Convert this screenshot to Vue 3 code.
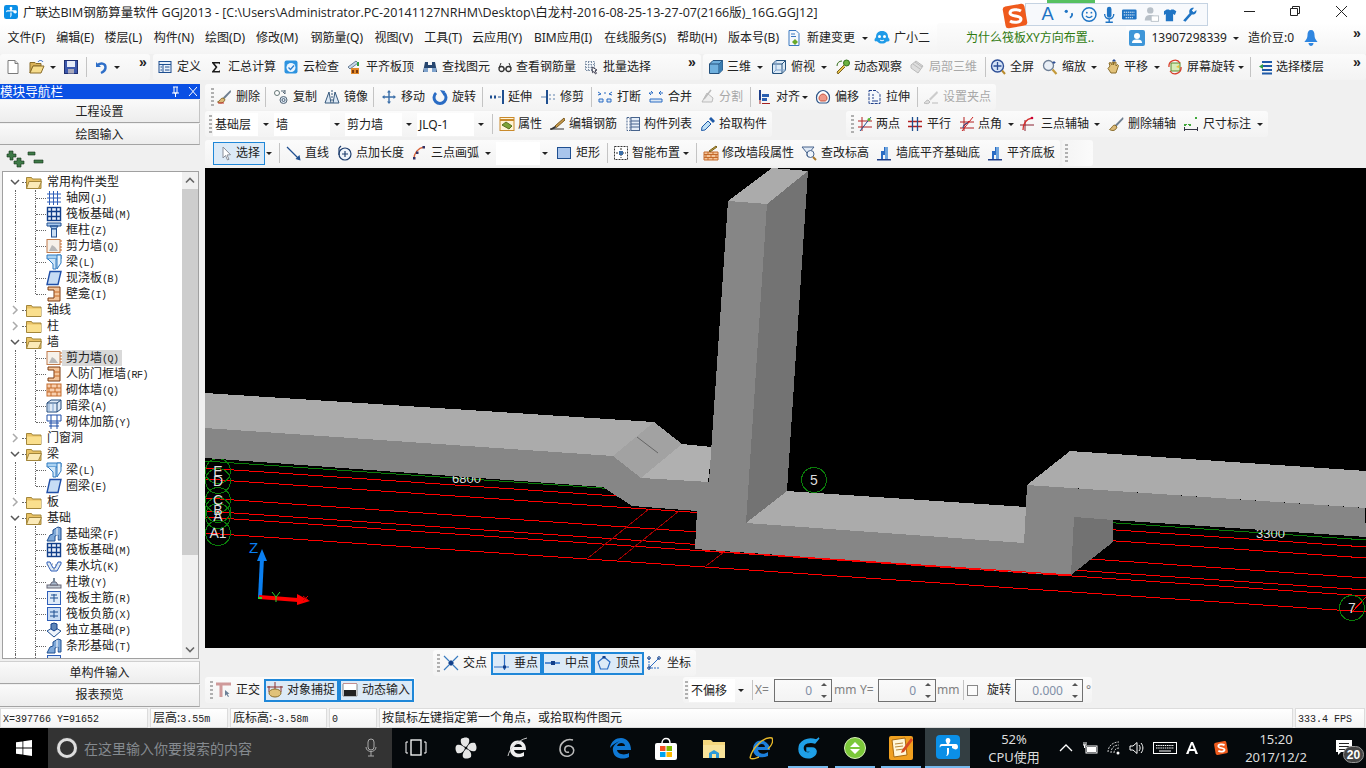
<script setup>
import { h } from 'vue'

const t = (ic, text, x, end, o = {}) => ({ k: 't', ic, text, x, w: end - x, ...o })
const a = (x) => ({ k: 'a', x: x - 3, w: 6 })
const s = (x) => ({ k: 's', x, w: 1 })
const g = (x) => ({ k: 'g', x, w: 3 })
const c = (text, x, end) => ({ k: 'c', text, x, w: end - x })
const l = (text, x, end, o = {}) => ({ k: 'l', text, x, w: end - x, ...o })
const n = (text, x, end) => ({ k: 'n', text, x, w: end - x })
const off = { dis: true }
const on = { on: true }

const place = (items, start) => {
  let cur = start
  return items.map((it) => {
    const m = it.x - cur
    cur = it.x + it.w
    return { ...it, style: { marginLeft: m + 'px', width: it.w + 'px' } }
  })
}

const useIcon = (name) => h('svg', { class: 'tb-ic' }, [h('use', { href: '#' + name })])

const renderItem = (it) => {
  if (it.k === 't') {
    return h('div', { class: ['tb-tool', { 'tb-dis': it.dis, 'tb-on': it.on, 'tb-wide': it.wide }], style: it.style }, [
      it.ic ? useIcon(it.ic) : null,
      h('span', { class: 'tb-txt' }, it.text)
    ])
  }
  if (it.k === 'a') return h('div', { class: 'tb-arrow', style: it.style })
  if (it.k === 's') return h('div', { class: 'tb-sep', style: it.style })
  if (it.k === 'g') return h('div', { class: 'tb-grip', style: it.style })
  if (it.k === 'c') return h('div', { class: 'tb-combo', style: it.style }, it.text)
  if (it.k === 'l') return h('div', { class: ['tb-label', it.cls], style: it.style }, it.text)
  if (it.k === 'n') {
    return h('div', { class: 'tb-num', style: it.style }, [
      h('span', { class: 'tb-val' }, it.text),
      h('span', { class: 'tb-spin' }, [h('i', { class: 'tb-up' }), h('i', { class: 'tb-down' })])
    ])
  }
  if (it.k === 'b') return h('div', { class: 'tb-check', style: it.style })
  return null
}

const ToolRow = (props) => {
  let cur = props.start
  return h('div', { class: 'tb-row' }, props.chunks.map((ch) => {
    const m = ch.x - cur
    cur = ch.end
    return h('div', {
      class: ['tb-chunk', ch.cls],
      style: { marginLeft: m + 'px', width: ch.end - ch.x + 'px' }
    }, place(ch.items, ch.x).map(renderItem))
  }))
}

const menuRow = [
  { x: 0, end: 937, cls: 'tb-flat', items: [
    t(null, '文件(F)', 7, 45), t(null, '编辑(E)', 55, 94), t(null, '楼层(L)', 104, 142), t(null, '构件(N)', 152, 194),
    t(null, '绘图(D)', 204, 245), t(null, '修改(M)', 255, 298), t(null, '钢筋量(Q)', 309, 363), t(null, '视图(V)', 373, 413),
    t(null, '工具(T)', 423, 462), t(null, '云应用(Y)', 472, 522), t(null, 'BIM应用(I)', 533, 592), t(null, '在线服务(S)', 603, 666),
    t(null, '帮助(H)', 676, 717), t(null, '版本号(B)', 727, 779), t('i-newchg', '新建变更', 786, 855), a(865),
    t('i-bot', '广小二', 874, 930)
  ] },
  { x: 937, end: 1126, cls: 'tb-tip', items: [l('为什么筏板XY方向布置..', 966, 1094, { cls: 'tb-green' })] },
  { x: 1126, end: 1366, cls: 'tb-flat', items: [
    t('i-avatar', '13907298339', 1129, 1227), a(1236), l('造价豆:0', 1248, 1294), t('i-bell', '', 1303, 1322),
    l('»', 1353, 1363, { cls: 'tb-more' })
  ] }
]

const row1 = [
  { x: 0, end: 150, items: [
    t('i-doc', '', 5, 21), t('i-open', '', 29, 45), a(53), t('i-save', '', 63, 79), s(86), t('i-undo', '', 93, 109), a(117),
    l('»', 139, 149, { cls: 'tb-more' })
  ] },
  { x: 153, end: 701, items: [
    t('i-define', '定义', 157, 201), t('i-sigma', '汇总计算', 208, 276), t('i-cloud', '云检查', 283, 339), t('i-flush', '平齐板顶', 346, 414),
    t('i-binoc', '查找图元', 422, 490), t('i-glass', '查看钢筋量', 497, 576), t('i-batch', '批量选择', 583, 651),
    l('»', 688, 698, { cls: 'tb-more' })
  ] },
  { x: 703, end: 1366, items: [
    t('i-cube', '三维', 708, 751), a(760), t('i-cube2', '俯视', 771, 815), a(824), t('i-orbit', '动态观察', 835, 902),
    t('i-part', '局部三维', 909, 977, off), s(985), t('i-full', '全屏', 990, 1034), t('i-zoom', '缩放', 1042, 1086), a(1094),
    t('i-hand', '平移', 1105, 1148), a(1157), t('i-rot', '屏幕旋转', 1167, 1235), a(1241), s(1250), t('i-floors', '选择楼层', 1258, 1324),
    l('»', 1353, 1363, { cls: 'tb-more' })
  ] }
]

const row2 = [
  { x: 205, end: 996, items: [
    g(211), t('i-brush', '删除', 216, 260), s(265), t('i-copy', '复制', 273, 317), t('i-mirror', '镜像', 324, 368), s(373),
    t('i-move', '移动', 381, 425), t('i-rotate', '旋转', 432, 476), s(482), t('i-extend', '延伸', 489, 532), t('i-trim', '修剪', 540, 584), s(591),
    t('i-break', '打断', 597, 641), t('i-merge', '合并', 648, 692), t('i-split', '分割', 699, 743, off), s(750),
    t('i-align', '对齐', 757, 800), a(805), t('i-offset', '偏移', 815, 859), t('i-stretch', '拉伸', 867, 910), s(917), t('i-grip', '设置夹点', 923, 991, off)
  ] }
]

const row3 = [
  { x: 205, end: 772, items: [
    g(209), c('基础层', 213, 258), a(266), c('墙', 274, 330), a(337), c('剪力墙', 345, 402), a(409), c('JLQ-1', 417, 474), a(481), s(492),
    t('i-prop', '属性', 499, 542), t('i-edit', '编辑钢筋', 549, 617), t('i-list', '构件列表', 625, 692), t('i-pick', '拾取构件', 700, 767)
  ] },
  { x: 846, end: 1268, items: [
    g(851), t('i-two', '两点', 857, 900), t('i-par', '平行', 907, 951), t('i-ang', '点角', 959, 1002), a(1011),
    t('i-arc3', '三点辅轴', 1019, 1089), a(1097), t('i-delaux', '删除辅轴', 1108, 1176), t('i-dim', '尺寸标注', 1183, 1251), a(1260)
  ] }
]

const row4 = [
  { x: 205, end: 1060, items: [
    t('i-cursor', '选择', 213, 265, { on: true, wide: true }), a(269), s(279), t('i-line', '直线', 286, 329), t('i-pluslen', '点加长度', 336, 404),
    t('i-arc', '三点画弧', 411, 479), a(488), c('', 496, 540), a(545), t('i-rect', '矩形', 556, 600), s(607), t('i-smart', '智能布置', 613, 680), a(686), s(696),
    t('i-brick', '修改墙段属性', 703, 794), t('i-elev', '查改标高', 801, 869), t('i-wallb', '墙底平齐基础底', 876, 980), t('i-wallb', '平齐底板', 987, 1055)
  ] },
  { x: 1062, end: 1093, cls: 'tb-stub', items: [g(1065)] }
]

const row5 = [
  { x: 433, end: 696, items: [
    g(437), t('i-cross', '交点', 443, 487), t('i-perp', '垂点', 491, 542, on), t('i-mid', '中点', 542, 593, on), t('i-vert', '顶点', 593, 644, on),
    t('i-coord', '坐标', 646, 691)
  ] }
]

const row6 = [
  { x: 205, end: 415, items: [
    g(210), t('i-ortho', '正交', 216, 260), t('i-snap', '对象捕捉', 264, 339, on), t('i-dyn', '动态输入', 339, 414, on)
  ] },
  { x: 683, end: 1092, items: [
    g(685), c('不偏移', 689, 735), a(741), s(752), l('X=', 755, 771, { cls: 'tb-muted' }), n('0', 774, 832), l('mm', 834, 856, { cls: 'tb-muted' }),
    l('Y=', 860, 875, { cls: 'tb-muted' }), n('0', 878, 936), l('mm', 937, 958, { cls: 'tb-muted' }), s(963), { k: 'b', x: 967, w: 11 },
    l('旋转', 987, 1011), n('0.000', 1015, 1083), l('°', 1086, 1091, { cls: 'tb-muted' })
  ] }
]

const tree = [
  { f: 1, open: 1, zh: '常用构件类型' },
  { ic: 'i-t-grid', zh: '轴网', k: '(J)', g: 1 }, { ic: 'i-t-raft', zh: '筏板基础', k: '(M)', g: 1 }, { ic: 'i-t-col', zh: '框柱', k: '(Z)', g: 1 },
  { ic: 'i-t-shear', zh: '剪力墙', k: '(Q)', g: 1 }, { ic: 'i-t-beam', zh: '梁', k: '(L)', g: 1 }, { ic: 'i-t-slab', zh: '现浇板', k: '(B)', g: 1 },
  { ic: 'i-t-niche', zh: '壁龛', k: '(I)', g: 1, last: 1 },
  { f: 1, zh: '轴线' }, { f: 1, zh: '柱' }, { f: 1, open: 1, zh: '墙' },
  { ic: 'i-t-shear', zh: '剪力墙', k: '(Q)', g: 1, sel: 1 }, { ic: 'i-t-niche', zh: '人防门框墙', k: '(RF)', g: 1 }, { ic: 'i-t-brick', zh: '砌体墙', k: '(Q)', g: 1 },
  { ic: 'i-t-hidden', zh: '暗梁', k: '(A)', g: 1 }, { ic: 'i-t-reinf', zh: '砌体加筋', k: '(Y)', g: 1, last: 1 },
  { f: 1, zh: '门窗洞' }, { f: 1, open: 1, zh: '梁' },
  { ic: 'i-t-beam', zh: '梁', k: '(L)', g: 1 }, { ic: 'i-t-slab', zh: '圈梁', k: '(E)', g: 1, last: 1 },
  { f: 1, zh: '板' }, { f: 1, open: 1, zh: '基础' },
  { ic: 'i-t-fbeam', zh: '基础梁', k: '(F)', g: 1 }, { ic: 'i-t-raft', zh: '筏板基础', k: '(M)', g: 1 }, { ic: 'i-t-pit', zh: '集水坑', k: '(K)', g: 1 },
  { ic: 'i-t-pier', zh: '柱墩', k: '(Y)', g: 1 }, { ic: 'i-t-main', zh: '筏板主筋', k: '(R)', g: 1 }, { ic: 'i-t-neg', zh: '筏板负筋', k: '(X)', g: 1 },
  { ic: 'i-t-iso', zh: '独立基础', k: '(P)', g: 1 }, { ic: 'i-t-fbeam', zh: '条形基础', k: '(T)', g: 1 }, { ic: 'i-t-main', zh: '', k: '', g: 1 }
]

const hLines = [
  [479, 558], [498, 578], [511, 590], [517, 596], [533, 612], [468, 547]
]
const circles = [
  { x: 218, y: 471, t: 'E' }, { x: 218, y: 481, t: 'D' }, { x: 218, y: 500, t: 'C' }, { x: 218, y: 510, t: 'B' },
  { x: 218, y: 516, t: 'A' }, { x: 218, y: 533, t: 'A1' }, { x: 814, y: 480, t: '5' }, { x: 1352, y: 608, t: '7' }
]

const cells = [
  { w: 148, t: 'X=397766 Y=91652', cls: 'mono' }, { w: 78, zh: '层高:', t: '3.55m', cls: 'mono' }, { w: 97, zh: '底标高:', t: '-3.58m', cls: 'mono' },
  { w: 48, t: '0', cls: 'mono' }, { w: 914, zh: '按鼠标左键指定第一个角点，或拾取构件图元', t: '' }, { w: 70, t: '333.4 FPS', cls: 'mono' }
]

const taskIcons = place([
  { x: 404, w: 24, ic: 'k-task' }, { x: 454, w: 24, ic: 'k-fan' }, { x: 506, w: 24, ic: 'k-ie' }, { x: 556, w: 24, ic: 'k-swirl' },
  { x: 608, w: 24, ic: 'k-edge' }, { x: 654, w: 24, ic: 'k-store' }, { x: 702, w: 24, ic: 'k-folder' }, { x: 749, w: 24, ic: 'k-ieb' },
  { x: 796, w: 24, ic: 'k-g', run: 1 }, { x: 843, w: 24, ic: 'k-green', run: 1 }, { x: 889, w: 24, ic: 'k-note', run: 1 }
], 392)
const trayIcons = place([
  { x: 1058, w: 16, ic: 'k-up' }, { x: 1082, w: 16, ic: 'k-batt' }, { x: 1107, w: 16, ic: 'k-wifi' }, { x: 1129, w: 16, ic: 'k-vol' },
  { x: 1153, w: 24, ic: 'k-kbd' }, { x: 1184, w: 16, ic: 'k-a' }, { x: 1212, w: 18, ic: 'k-s' }
], 1050)
</script>

<template>
  <div class="screen">
    <svg class="defs" aria-hidden="true">
      <symbol id="i-doc" viewBox="0 0 16 16"><path d="M3 1.500h7l3 3v10H3z" fill="#fff" stroke="#7a7a7a"/><path d="M10 1.500v3h3" fill="#ddd" stroke="#7a7a7a"/></symbol>
      <symbol id="i-open" viewBox="0 0 16 16"><path d="M1 3.500h5l1 1h5V7H4l-3 7z" fill="#d9b25a" stroke="#8a6d2a"/><path d="M4 7h11l-3 7H1z" fill="#f6dc8c" stroke="#8a6d2a"/><path d="M9 3c1-2 4-2 5 0" fill="none" stroke="#2b62c4"/></symbol>
      <symbol id="i-save" viewBox="0 0 16 16"><rect x="1.500" y="1.500" width="13" height="13" fill="#3c58ac" stroke="#1f2f70"/><rect x="4" y="2" width="8" height="6" fill="#e6ecf8"/><rect x="5" y="10" width="6" height="4.500" fill="#aab"/></symbol>
      <symbol id="i-undo" viewBox="0 0 16 16"><path d="M3 3v5h5z" fill="#2f6fc8"/><path d="M4 7c3-4 9-3 8.500 2-.3 2-2 4-4.500 5" fill="none" stroke="#2f6fc8" stroke-width="2.400"/></symbol>
      <symbol id="i-define" viewBox="0 0 16 16"><rect x="2" y="2.500" width="12" height="11" fill="#e8f0fa" stroke="#1e4f90"/><path d="M2 5.500h12M6 5.500v8M3.500 8h1.500M3.500 11h1.500M8 8h4.500M8 11h4.500" stroke="#1e4f90"/></symbol>
      <symbol id="i-sigma" viewBox="0 0 16 16"><path d="M4 3h8v2.500L11 4.500H6.500L9.500 8l-3 4H11l1-1v2.500H4v-1L7.500 8.300 4 4z" fill="#1a1a1a"/></symbol>
      <symbol id="i-cloud" viewBox="0 0 16 16"><rect x="1.500" y="1.500" width="13" height="13" rx="2" fill="#2d93e0"/><circle cx="8" cy="8.500" r="4.500" fill="#e9f5ff"/><path d="M5.500 8.500l2 2 3.500-4" fill="none" stroke="#2d7fd0" stroke-width="1.300"/></symbol>
      <symbol id="i-flush" viewBox="0 0 16 16"><path d="M2 8l8-6 2 2-8 6z" fill="#c7d7e8" stroke="#6a7f96"/><rect x="5" y="9" width="8" height="6" fill="#e28a2b"/><path d="M6 11h2v3H6zM10 11h2v3h-2z" fill="#7a3b10"/><path d="M12 3v4" stroke="#2f9e44" stroke-width="2"/></symbol>
      <symbol id="i-binoc" viewBox="0 0 16 16"><path d="M3 3h3v3h4V3h3l2 10h-5V9H6v4H1z" fill="#27466f"/><rect x="2" y="9" width="4" height="4" fill="#7ea2cc"/><rect x="10" y="9" width="4" height="4" fill="#7ea2cc"/></symbol>
      <symbol id="i-glass" viewBox="0 0 16 16"><circle cx="4.500" cy="10" r="2.500" fill="none" stroke="#333" stroke-width="1.300"/><circle cx="11.500" cy="10" r="2.500" fill="none" stroke="#333" stroke-width="1.300"/><path d="M7 10h2M2 9l2-5M14 9l-2-5" stroke="#333"/></symbol>
      <symbol id="i-batch" viewBox="0 0 16 16"><path d="M2.500 2.500h9v9h-9zM2.500 5.500h9M2.500 8.500h9M5.500 2.500v9M8.500 2.500v9" fill="#f2f5f9" stroke="#7c8ea4" stroke-dasharray="1.500 1"/><path d="M9 8l5 3-2 .8 1.500 2.500-1 .7-1.500-2.500-1.500 1.200z" fill="#fff" stroke="#445"/></symbol>
      <symbol id="i-cube" viewBox="0 0 16 16"><path d="M1.500 5L5 1.500h9.500V11L11 14.500H1.500z" fill="#6fb0de" stroke="#24517c"/><path d="M1.500 5H11v9.500M11 5l3.500-3.500" fill="none" stroke="#24517c"/><path d="M11 5l3.500-3.500V11L11 14.500z" fill="#3a7cb0"/></symbol>
      <symbol id="i-cube2" viewBox="0 0 16 16"><path d="M1.500 5L5 1.500h9.500V11L11 14.500H1.500z" fill="#dceaf6" stroke="#24517c"/><path d="M1.500 5H11v9.500M11 5l3.500-3.500" fill="none" stroke="#24517c"/><path d="M5 1.500V11L1.500 14.500M5 11h9.500" stroke="#7ea2cc" fill="none"/></symbol>
      <symbol id="i-orbit" viewBox="0 0 16 16"><circle cx="11.500" cy="4" r="3" fill="#6cb33f" stroke="#356e1c"/><path d="M9 6L2 13l1 2 7-7" fill="#e6c14a" stroke="#7a6220"/><path d="M2 7c0-3 2-5 5-5" fill="none" stroke="#356e1c"/></symbol>
      <symbol id="i-part" viewBox="0 0 16 16"><path d="M2 6l5-4 7 5-5 7-7-5z" fill="#ddd" stroke="#bbb"/><path d="M6 3l7 5M4 5l7 5" stroke="#bbb"/></symbol>
      <symbol id="i-full" viewBox="0 0 16 16"><circle cx="7.500" cy="7" r="6" fill="#d6e4f7" stroke="#2e4f96" stroke-width="1.400"/><path d="M7.500 3v8M3.500 7h8" stroke="#2e4f96" stroke-width="1.300"/><path d="M12 11.500l3 3.500" stroke="#b88a2c" stroke-width="2"/></symbol>
      <symbol id="i-zoom" viewBox="0 0 16 16"><circle cx="6.500" cy="6.500" r="5" fill="#e8eef6" stroke="#6e7f96" stroke-width="1.300"/><path d="M10.500 10.500l4 4.500" stroke="#c49a3a" stroke-width="2.200"/><path d="M12 2v3M10.500 3.500h3" stroke="#2e4f96"/></symbol>
      <symbol id="i-hand" viewBox="0 0 16 16"><path d="M5 7l-1-3 1.500-.5L7 6V3h1.500v3l1-3H11v4l1.500-1.500 1 1L11 14H6L3 9.500z" fill="#e2c27a" stroke="#8a6d2a"/><path d="M9 0v3M7.500 1.500h3" stroke="#2e4f96"/></symbol>
      <symbol id="i-rot" viewBox="0 0 16 16"><rect x="4" y="4" width="9" height="8" fill="#d8ecb8" stroke="#5b8c2a"/><path d="M9 8l3-2v3z" fill="#e8c23a"/><path d="M2 8a6 6 0 0 1 11-4M14 8a6 6 0 0 1-11 4" fill="none" stroke="#d8402c" stroke-width="1.300"/></symbol>
      <symbol id="i-floors" viewBox="0 0 16 16"><path d="M4 3h10M4 7h10M4 11h10M4 14.500h10" stroke="#1f5aa8" stroke-width="1.800"/><path d="M5 5L1 7.500 5 10z" fill="#2f9e44"/></symbol>
      <symbol id="i-brush" viewBox="0 0 16 16"><path d="M14.500 1L7 8.500l1.500 1.500L15 3z" fill="#6f7f90"/><path d="M7 9c-3 0-2.500 3-5.500 4 3 2 6.500 1 7.500-2.500z" fill="#d9b878" stroke="#8a6d2a"/><path d="M2 14h6" stroke="#c33"/></symbol>
      <symbol id="i-copy" viewBox="0 0 16 16"><circle cx="4" cy="4" r="2.500" fill="#fff" stroke="#677"/><circle cx="10.500" cy="11" r="3.500" fill="#dbe7f4" stroke="#567"/><circle cx="10.500" cy="11" r="1.500" fill="none" stroke="#567"/><path d="M8 2h4M12 1v4l-2-2" stroke="#567" fill="none"/></symbol>
      <symbol id="i-mirror" viewBox="0 0 16 16"><path d="M1 14L5 3l2 11zM9 14l2-11 4 11z" fill="#dce9f6" stroke="#37597c"/><path d="M8 1v14" stroke="#37597c" stroke-dasharray="2 1"/></symbol>
      <symbol id="i-move" viewBox="0 0 16 16"><path d="M8 1L6 3.500h1.300v3.800H3.500V6L1 8l2.500 2V8.700h3.800v3.800H6L8 15l2-2.500H8.700V8.700h3.800V10L15 8l-2.500-2v1.300H8.700V3.500H10z" fill="#3a6ea8"/></symbol>
      <symbol id="i-rotate" viewBox="0 0 16 16"><path d="M4 4a6 6 0 1 0 8 0" fill="none" stroke="#2a6cc4" stroke-width="3"/><path d="M8 1l5 1-1 5z" fill="#2a6cc4"/></symbol>
      <symbol id="i-extend" viewBox="0 0 16 16"><path d="M14 1v14" stroke="#1f4f90" stroke-width="2"/><path d="M1 8h3M5 8h3" stroke="#1f4f90" stroke-width="3" stroke-dasharray="2 1"/><path d="M9 8h3" stroke="#1f4f90"/></symbol>
      <symbol id="i-trim" viewBox="0 0 16 16"><path d="M7 1v14" stroke="#1f4f90" stroke-width="2"/><path d="M1 8h5M9 6h2M9 10h2M13 6h2M13 10h2" stroke="#5f82ad" stroke-width="1.200"/></symbol>
      <symbol id="i-break" viewBox="0 0 16 16"><path d="M2 10h4v3H2zM10 10h4v3h-4z" fill="#dbe7f4" stroke="#2a6cc4"/><path d="M1 3l3 2M1 6l3-1M15 3l-3 2M15 6l-3-1M7 4h2" stroke="#2a6cc4"/></symbol>
      <symbol id="i-merge" viewBox="0 0 16 16"><path d="M2 10h12v3H2z" fill="#dbe7f4" stroke="#2a6cc4"/><path d="M1 4h4l-2-2M1 4l2 2M15 4h-4l2-2M11 4l2 2" fill="none" stroke="#2a6cc4"/></symbol>
      <symbol id="i-split" viewBox="0 0 16 16"><path d="M3 13h10l1-4-6-5z" fill="#eee" stroke="#bbb"/><path d="M12 1L5 10" stroke="#bbb" stroke-width="1.500"/></symbol>
      <symbol id="i-align" viewBox="0 0 16 16"><path d="M3 1v14M5 14.500h8" stroke="#a42020"/><path d="M5 5h7v3H5zM5 9h5v3H5z" fill="#2a5fb0"/><path d="M3 1v10" stroke="#1f3f8a" stroke-width="2"/></symbol>
      <symbol id="i-offset" viewBox="0 0 16 16"><path d="M8 1.500c3 0 6.500 3 6.500 7 0 3-1.500 5-3 5.500H4.500c-1.500-.5-3-2.500-3-5.500 0-4 3.500-7 6.500-7z" fill="#fff" stroke="#30588a" stroke-width="1.200"/><path d="M8 5c2 0 4 2 4 4s-1 3-2 3H6c-1 0-2-1-2-3s2-4 4-4z" fill="#ee9a8a" stroke="#c65540"/></symbol>
      <symbol id="i-stretch" viewBox="0 0 16 16"><path d="M2 1.500h7l4 4v9H2z" fill="#f4f8fc" stroke="#1f3f8a" stroke-dasharray="3 1"/><path d="M5 6h2M5 9h2M5 12h6" stroke="#1f3f8a"/></symbol>
      <symbol id="i-grip" viewBox="0 0 16 16"><path d="M14 2L6 10l1.500 1.500L15 4z" fill="#ccc"/><path d="M5 11c-2 0-2 2-4 3 2 1 5 1 6-1z" fill="#ddd" stroke="#bbb"/><path d="M9 14h6" stroke="#bbb"/></symbol>
      <symbol id="i-prop" viewBox="0 0 16 16"><rect x="1" y="1.500" width="14" height="13" fill="#fff4d8" stroke="#c98a2c"/><path d="M1 4h14" stroke="#c98a2c" stroke-width="2"/><path d="M3 9l4-3 6 4-3 3z" fill="#7ca238" stroke="#5a6f20"/></symbol>
      <symbol id="i-edit" viewBox="0 0 16 16"><path d="M15 2L6 10l1.500 1.500L16 4z" fill="#c89a4a" stroke="#7a5a20"/><path d="M1 13l5-3 1 2-5 2z" fill="#333"/><path d="M1 13h14" stroke="#333"/></symbol>
      <symbol id="i-list" viewBox="0 0 16 16"><rect x="2" y="1.500" width="3" height="13" fill="#fff" stroke="#47638c" stroke-dasharray="2 1"/><rect x="6" y="1.500" width="8.500" height="13" fill="#e6eef8" stroke="#47638c"/><path d="M6 5h8.500M6 8h8.500M6 11h8.500" stroke="#47638c"/></symbol>
      <symbol id="i-pick" viewBox="0 0 16 16"><path d="M1.500 14.500L2 11l6-6 3 3-6 6z" fill="#bfe0f6" stroke="#1f5aa8"/><path d="M9 3l2-2 4 4-2 2z" fill="#1f5aa8"/></symbol>
      <symbol id="i-two" viewBox="0 0 16 16"><path d="M1 5h14M1 11h14M5 1v14" stroke="#b32020"/><path d="M3 15L14 1" stroke="#1f4f90"/><circle cx="12" cy="3.500" r="1.500" fill="#5cb82c"/></symbol>
      <symbol id="i-par" viewBox="0 0 16 16"><path d="M1 5.500h14M1 10.500h14" stroke="#b32020" stroke-width="1.300"/><path d="M5.500 1v14M10.500 1v14" stroke="#1f4f90" stroke-width="1.300"/></symbol>
      <symbol id="i-ang" viewBox="0 0 16 16"><path d="M1 6h14M1 12h14M5 1v14" stroke="#b32020"/><path d="M3 15L14 1M5 10l5-5" stroke="#c92020"/><path d="M4 12a5 5 0 0 1 5-5" fill="none" stroke="#1f4f90"/></symbol>
      <symbol id="i-arc3" viewBox="0 0 16 16"><path d="M1 9h14M6 4v11" stroke="#8a2030"/><path d="M4 14C4 7 8 3 13 2" fill="none" stroke="#d43030" stroke-width="1.300"/><circle cx="13" cy="2" r="1.300" fill="#c03"/></symbol>
      <symbol id="i-delaux" viewBox="0 0 16 16"><path d="M15 1L7 9l1.500 1.500L15.500 3z" fill="#6f7f90"/><path d="M7 9c-3 0-2.500 3-5.500 4.500 3 2 6.500 1 7.500-2.500z" fill="#d9b878" stroke="#8a6d2a"/></symbol>
      <symbol id="i-dim" viewBox="0 0 16 16"><path d="M1.500 11v4M14.500 11v4M1.500 13.500h13" stroke="#334"/><rect x="1" y="8" width="2" height="2" fill="#3fa83a"/><rect x="6" y="8" width="2" height="2" fill="#3fa83a"/><rect x="12" y="1" width="2" height="2" fill="#3fa83a"/><path d="M3 8.500h3" stroke="#3fa83a" stroke-dasharray="1 1"/></symbol>
      <symbol id="i-cursor" viewBox="0 0 16 16"><path d="M6 2v11l2.500-2.500L10.500 15l1.500-.7L10 10l3.500-.3z" fill="#fff" stroke="#8a8f99"/></symbol>
      <symbol id="i-line" viewBox="0 0 16 16"><path d="M1 2l12 12" stroke="#1f4f90" stroke-width="1.300"/><path d="M14.500 15.500L9.500 14l4-4z" fill="#1f4f90"/></symbol>
      <symbol id="i-pluslen" viewBox="0 0 16 16"><circle cx="9" cy="9" r="6" fill="#eef4fb" stroke="#1f3f6f" stroke-width="1.200"/><path d="M9 6v6M6 9h6" stroke="#1f3f6f" stroke-width="1.200"/><path d="M3 3l2-2M3 3v7" stroke="#1f3f6f" stroke-width="1.200" fill="none"/></symbol>
      <symbol id="i-arc" viewBox="0 0 16 16"><path d="M3 14C3 8 7 3 13 2" fill="none" stroke="#d9643a" stroke-width="1.400"/><rect x="2" y="12" width="2.500" height="2.500" fill="#336"/><rect x="11.500" y="1" width="2.500" height="2.500" fill="#336"/><rect x="5" y="6.500" width="2.500" height="2.500" fill="#336"/></symbol>
      <symbol id="i-rect" viewBox="0 0 16 16"><rect x="1.500" y="2.500" width="13" height="11" fill="#a9c5ec" stroke="#1f4f90"/></symbol>
      <symbol id="i-smart" viewBox="0 0 16 16"><rect x="1.500" y="1.500" width="13" height="13" fill="#fff" stroke="#333" stroke-dasharray="2 1"/><path d="M8 3v10M3 8h10" stroke="#333" stroke-dasharray="2 1"/><rect x="6" y="6" width="4" height="4" fill="#3a6ea8"/></symbol>
      <symbol id="i-brick" viewBox="0 0 16 16"><path d="M1 7h14v8H1z" fill="#f4c59a" stroke="#c46a2a"/><path d="M1 9.500h14M1 12.500h14M5 7v2.500M10 7v2.500M3 9.500v3M8 9.500v3M13 9.500v3M5 12.500V15M10 12.500V15" stroke="#c46a2a"/><path d="M13 1L6 6l1 1 7-5z" fill="#c8a23a" stroke="#7a6220"/></symbol>
      <symbol id="i-elev" viewBox="0 0 16 16"><path d="M1 2h12l-5 6v4L6 11V8z" fill="#dfe9f5" stroke="#47638c"/><circle cx="9.500" cy="9" r="3.500" fill="#eef4fb" stroke="#47638c"/><path d="M12 12l3 3" stroke="#a8762a" stroke-width="2"/></symbol>
      <symbol id="i-wallb" viewBox="0 0 16 16"><path d="M1 14h14v1.500H1z" fill="#1f3f8a"/><path d="M5 14V6h3V2h4v12h-3v-4H7v4z" fill="#2a6cc4"/><path d="M9 2h3v12H9z" fill="#6ea4de"/></symbol>
      <symbol id="i-cross" viewBox="0 0 16 16"><path d="M1 1l14 14M15 1L1 15" stroke="#3a7cc0" stroke-width="1.200"/><path d="M8 5l3 3-3 3-3-3z" fill="#123f8a"/></symbol>
      <symbol id="i-perp" viewBox="0 0 16 16"><path d="M0 12h15M10.500 0v15" stroke="#2a6cc4" stroke-width="1.200"/><rect x="9" y="10.500" width="3" height="3" fill="#123f8a"/></symbol>
      <symbol id="i-mid" viewBox="0 0 16 16"><path d="M0 8h15" stroke="#2a6cc4" stroke-width="1.500"/><rect x="6" y="6" width="4" height="4" fill="#123f8a"/></symbol>
      <symbol id="i-vert" viewBox="0 0 16 16"><path d="M8 2l6 5-2.500 7h-7L2 7z" fill="none" stroke="#2a6cc4" stroke-width="1.200"/><rect x="6.500" y="1" width="3" height="2.500" fill="#123f8a"/></symbol>
      <symbol id="i-coord" viewBox="0 0 16 16"><path d="M3 3v10h11" fill="none" stroke="#2a6cc4" stroke-dasharray="2 1"/><path d="M3 13L13 3" stroke="#2a6cc4"/><circle cx="13" cy="3" r="1.300" fill="none" stroke="#123f8a"/><circle cx="3" cy="3" r="1.300" fill="none" stroke="#123f8a"/><circle cx="3" cy="13" r="1.300" fill="none" stroke="#123f8a"/></symbol>
      <symbol id="i-ortho" viewBox="0 0 16 16"><path d="M0 2h15M5 2v13" stroke="#cf9a9a" stroke-width="3"/><path d="M9 8v6l1.500-1.500 1.500 2.500 1-.5-1.500-2.500 2-.3z" fill="#6a7f96"/></symbol>
      <symbol id="i-snap" viewBox="0 0 16 16"><path d="M8 0v8M2 4v6M14 4v6" stroke="#8a3030"/><path d="M0 5h16" stroke="#8a3030"/><ellipse cx="8" cy="11" rx="6" ry="4" fill="#e0c27a" stroke="#8a6d2a"/></symbol>
      <symbol id="i-dyn" viewBox="0 0 16 16"><path d="M1 2h14M1 6h14" stroke="#b97070" stroke-width="1.500"/><path d="M1 2v12h14V2" fill="#fff" stroke="#888"/><rect x="2" y="8" width="12" height="6" fill="#222"/></symbol>
      <symbol id="i-newchg" viewBox="0 0 16 16"><path d="M3 .5h7l3 3v12H3z" fill="#f4f8fc" stroke="#3a78c0"/><path d="M9 9l3 3-3 3-3-3z" fill="#69a92a"/><path d="M5 4h4M5 6.500h5" stroke="#3a78c0"/></symbol>
      <symbol id="i-bot" viewBox="0 0 16 16"><path d="M8 1c4 0 6 2.500 6 6 0 1 1.500 1 1.500 3S13 11 12 12c-1 2-7 2-8 0-1-1-3.500 0-3.500-2S2 8 2 7c0-3.500 2-6 6-6z" fill="#1f9be8"/><circle cx="5.500" cy="6.500" r="1.500" fill="#fff"/><circle cx="10.500" cy="6.500" r="1.500" fill="#fff"/><path d="M6 10c1 1 3 1 4 0" stroke="#fff" fill="none"/></symbol>
      <symbol id="i-avatar" viewBox="0 0 16 16"><rect x="0" y="0" width="16" height="16" rx="2" fill="#3f96d8"/><circle cx="8" cy="6" r="3" fill="#fff"/><path d="M3 13c0-3 2-3.500 5-3.500s5 .5 5 3.500z" fill="#fff"/></symbol>
      <symbol id="i-bell" viewBox="0 0 16 16"><path d="M8 0c2.500 0 3.500 2 3.500 5 0 4 2 5 3 7H1.500c1-2 3-3 3-7 0-3 1-5 3.500-5z" fill="#2f86e0"/><path d="M5.500 13h5c0 2-1.500 3-2.500 3s-2.500-1-2.500-3z" fill="#2f86e0"/></symbol>

      <symbol id="i-t-grid" viewBox="0 0 16 16"><path d="M3.500 1v14M7.500 1v14M11.500 1v14M1 4h14M1 8h14M1 12h14" stroke="#2f5fb8"/></symbol>
      <symbol id="i-t-raft" viewBox="0 0 16 16"><rect x="1.500" y="1.500" width="13" height="13" fill="#e8f0fb" stroke="#123f8a" stroke-width="1.400"/><path d="M5.500 2v12M10.500 2v12M2 5.500h12M2 10.500h12" stroke="#123f8a" stroke-width="1.300"/></symbol>
      <symbol id="i-t-col" viewBox="0 0 16 16"><path d="M1 1h14v3H1zM4 4h8l-2 3H6z" fill="#a9c9ee" stroke="#1f4f90"/><rect x="5.500" y="7" width="5" height="8" fill="#c9def5" stroke="#1f4f90"/></symbol>
      <symbol id="i-t-shear" viewBox="0 0 16 16"><rect x="1" y="1.500" width="13" height="13" fill="#f6f1ea" stroke="#c07a4a"/><path d="M3 13l3-6 3 2 3 4z" fill="#b8b8b8"/><path d="M14 3h2M14 6h2M14 9h2M14 12h2" stroke="#c46a2a"/></symbol>
      <symbol id="i-t-beam" viewBox="0 0 16 16"><path d="M1 1h14v4H1z" fill="#a9d2f2" stroke="#2f7ac0"/><path d="M2 5l5 5v5h3V5" fill="#cfe6f8" stroke="#2f7ac0"/><path d="M11 1v14l4-6V1z" fill="#eaf5fc" stroke="#2f7ac0"/></symbol>
      <symbol id="i-t-slab" viewBox="0 0 16 16"><path d="M4 1.500h11l-3 13H1z" fill="#c7dcf4" stroke="#1f4fa8" stroke-width="1.400"/></symbol>
      <symbol id="i-t-niche" viewBox="0 0 16 16"><path d="M2 1h12v14H2v-3h6V4H2z" fill="#f4c59a" stroke="#7a3a10"/><path d="M8 6h6M8 10h6" stroke="#c46a2a"/></symbol>
      <symbol id="i-t-brick" viewBox="0 0 16 16"><rect x="1" y="2" width="14" height="12" fill="#f8d0b0" stroke="#c46a2a"/><path d="M1 6h14M1 10h14M5 2v4M11 2v4M3 6v4M9 6v4M5 10v4M11 10v4" stroke="#c46a2a"/></symbol>
      <symbol id="i-t-hidden" viewBox="0 0 16 16"><path d="M1 5l4-3h10v9l-4 3H1z" fill="#dfeaf6" stroke="#234a7a"/><path d="M1 5h10v9M11 5l4-3" fill="none" stroke="#234a7a"/><path d="M3 5v9M7 5v9" stroke="#7ea2cc"/></symbol>
      <symbol id="i-t-reinf" viewBox="0 0 16 16"><path d="M1 1h14v6H1z" fill="none" stroke="#1f4fa8"/><path d="M5 1v14M11 1v14M3 9h10M3 12h10" stroke="#1f4fa8"/></symbol>
      <symbol id="i-t-fbeam" viewBox="0 0 16 16"><path d="M1 15l3-6 3-1V4l5-3 3 1v12h-3V9l-3 1v5z" fill="#7ea8d8" stroke="#1f4f90"/><path d="M11 2v12" stroke="#fff"/></symbol>
      <symbol id="i-t-pit" viewBox="0 0 16 16"><path d="M1 4h3l3 6h2l3-6h3v2l-4 7H5L1 6z" fill="#dfeaf6" stroke="#2f5fb8"/><path d="M6 6h1M9 7h1M7 11h2M2 8h1M13 8h1" stroke="#789"/></symbol>
      <symbol id="i-t-pier" viewBox="0 0 16 16"><rect x="1" y="11" width="14" height="3" fill="#c7cfd8" stroke="#667"/><path d="M4 11l2-3h4l2 3z" fill="#a9bbd0" stroke="#667"/><rect x="7" y="4" width="2" height="4" fill="#789"/></symbol>
      <symbol id="i-t-main" viewBox="0 0 16 16"><rect x="1.500" y="1.500" width="13" height="13" fill="#e0ebf8" stroke="#2f5fb8"/><path d="M8 4v8M4 8h8M5 5h6" stroke="#1f4f90"/></symbol>
      <symbol id="i-t-neg" viewBox="0 0 16 16"><rect x="1.500" y="1.500" width="13" height="13" fill="#c9dcf4" stroke="#2f5fb8"/><path d="M8 4v8M4 6h8M4 10h8" stroke="#1f4f90"/></symbol>
      <symbol id="i-t-iso" viewBox="0 0 16 16"><path d="M1 9l7-4 7 4-7 6z" fill="#eef4fb" stroke="#1f4f90"/><path d="M5 7V2l3-1 3 1v5l-3 2z" fill="#5f86b8" stroke="#123f8a"/></symbol>

      <symbol id="k-task" viewBox="0 0 24 24"><rect x="7" y="4" width="10" height="15" fill="none" stroke="#fff" stroke-width="1.300"/><path d="M4 6H2v11h2M20 6h2v11h-2" fill="none" stroke="#fff"/></symbol>
      <symbol id="k-fan" viewBox="0 0 24 24"><path d="M12 11C8 10 6 7 7 3c3-2 7-2 8 0 1 3-1 6-3 8zM13 12c1-4 4-6 8-5 2 3 2 7 0 8-3 1-6-1-8-3zM12 13c4 1 6 4 5 8-3 2-7 2-8 0-1-3 1-6 3-8zM11 12c-1 4-4 6-8 5-2-3-2-7 0-8 3-1 6 1 8 3z" fill="#e6e6e6"/></symbol>
      <symbol id="k-ie" viewBox="0 0 24 24"><path d="M20 14H8c.5 4 6 5 10 2v4c-6 3-14 1-14-7C4 6 10 3 15 5c4 2 5 5 5 9zM8 11h8c-.5-4-7-4-8 0z" fill="#eee"/><path d="M2 20C3 13 12 4 21 2" fill="none" stroke="#ccc"/></symbol>
      <symbol id="k-swirl" viewBox="0 0 24 24"><path d="M17 4C10 2 4 7 4 13s5 8 9 7 6-5 4-8-7-3-8 0 1 5 4 4" fill="none" stroke="#bbb" stroke-width="1.600"/></symbol>
      <symbol id="k-edge" viewBox="0 0 24 24"><path d="M2 12C3 5 8 2 13 2c6 0 10 5 10 12H9c.5 4 7 6 12 3v4c-6 3-15 2-16-6-1-5 3-8 7-10-3 1-7 3-10 7zM9 10h8c0-4-7-4-8 0z" fill="#0f78d4"/></symbol>
      <symbol id="k-store" viewBox="0 0 24 24"><rect x="1" y="7" width="22" height="17" rx="2" fill="#fff"/><path d="M8 7c0-6 8-6 8 0" fill="none" stroke="#fff" stroke-width="1.400"/><rect x="6" y="10" width="5.500" height="5" fill="#f25022"/><rect x="12.500" y="10" width="5.500" height="5" fill="#7fba00"/><rect x="6" y="16" width="5.500" height="5" fill="#00a4ef"/><rect x="12.500" y="16" width="5.500" height="5" fill="#ffb900"/></symbol>
      <symbol id="k-folder" viewBox="0 0 24 24"><path d="M1 4h8l2 2h12v16H1z" fill="#f5d77e"/><path d="M1 9h22v13H1z" fill="#f9e39a"/><path d="M7 22v-5l5-3 5 3v5h-3v-4h-4v4z" fill="#2f9ad8"/></symbol>
      <symbol id="k-ieb" viewBox="0 0 24 24"><path d="M21 14H9c.5 4 6 5 10 2v4c-7 3-15 1-15-7C4 6 10 3 15 5c4 2 6 5 6 9zM9 11h7c-.5-4-6-4-7 0z" fill="#1c7fdc"/><path d="M1 22C3 12 15 0 23 2c2 4-2 9-4 11M1 22c2 2 6 0 9-1" fill="none" stroke="#e8b92a" stroke-width="1.400"/></symbol>
      <symbol id="k-g" viewBox="0 0 24 24"><path d="M20 4C12 1 3 5 3 13s8 10 13 8 6-9 0-9h-5v3h4c0 3-8 3-8-3 0-5 7-7 12-5l4-5z" fill="#1fa0e8" stroke="#1fa0e8" stroke-width="1.400"/></symbol>
      <symbol id="k-green" viewBox="0 0 24 24"><circle cx="12" cy="12" r="10.500" fill="#7cc83a" stroke="#d8f0b8"/><path d="M7 11h10l-5-5zM7 13h10l-5 5z" fill="#fff"/></symbol>
      <symbol id="k-note" viewBox="0 0 24 24"><rect x="0" y="0" width="24" height="24" rx="2" fill="#f0a020"/><path d="M3 4l13-2 2 17-13 2z" fill="#fff6d8" stroke="#a86a10"/><path d="M6 8l8-1M6 11l8-1M7 14l8-1" stroke="#b8893a"/><path d="M22 2L13 14l-1 3 3-1 9-12z" fill="#d84a20"/></symbol>
      <symbol id="k-app" viewBox="0 0 24 24"><rect width="24" height="24" rx="4" fill="#0b8fe6"/><path d="M12 3c2 0 3 2 2 4l-1 2h7c2 0 2 3 2 3 0 2-2 3-4 2l-2-1v-2H6c-2 0-2 2-2 2-1-2 0-4 2-4h5L10 7c-1-2 0-4 2-4zM11 13h2v4c0 2-1 4-3 4 1-1 1-2 1-4z" fill="#fff"/></symbol>
      <symbol id="k-up" viewBox="0 0 16 16"><path d="M2 11l6-6 6 6" fill="none" stroke="#fff" stroke-width="1.300"/></symbol>
      <symbol id="k-batt" viewBox="0 0 16 16"><path d="M1 5h3M2 2v3M4 2v3" stroke="#fff"/><path d="M2.500 5v3" stroke="#fff"/><rect x="4" y="6" width="11" height="7" fill="#05090c" stroke="#fff"/><rect x="5" y="7" width="9" height="5" fill="#fff"/></symbol>
      <symbol id="k-wifi" viewBox="0 0 16 16"><path d="M1 12c0-6 5-10 11-10M4 13c0-5 3-8 8-8M7 13c0-3 2-5 5-5" fill="none" stroke="#ccc" stroke-dasharray="2 1"/><circle cx="11" cy="13" r="1.500" fill="#fff"/></symbol>
      <symbol id="k-vol" viewBox="0 0 16 16"><path d="M1 6h3l4-3.500v11L4 10H1z" fill="none" stroke="#fff"/><path d="M10 5c1.500 2 1.500 4 0 6M12 3c2.500 3 2.500 7 0 10" fill="none" stroke="#fff"/></symbol>
      <symbol id="k-kbd" viewBox="0 0 24 16"><rect x=".5" y="2.500" width="23" height="11" fill="none" stroke="#fff"/><path d="M3 5.500h18M3 8h18" stroke="#fff" stroke-dasharray="1.500 .7"/><path d="M6 11h12" stroke="#fff"/></symbol>
      <symbol id="k-a" viewBox="0 0 16 16"><path d="M2 14L7 2h2l5 12h-2.500l-1-3h-5l-1 3zM6.200 9h3.600L8 4.500z" fill="#fff"/></symbol>
      <symbol id="k-s" viewBox="0 0 18 18"><rect x="2" y="2" width="14" height="14" rx="2" fill="#ef5a1c" transform="rotate(-10 9 9)"/><path d="M13 6c-2-1.500-7-1.500-7 1s7 1.500 7 4-5 2.500-7 1" fill="none" stroke="#fff" stroke-width="2"/></symbol>
    </svg>

    <div class="title">
      <svg class="title-ic" viewBox="0 0 24 24"><use href="#k-app" /></svg>
      <span class="title-txt">广联达BIM钢筋算量软件 GGJ2013 - [C:\Users\Administrator.PC-20141127NRHM\Desktop\白龙村-2016-08-25-13-27-07(2166版)_16G.GGJ12]</span>
      <div class="win">
        <svg viewBox="0 0 46 23"><path d="M18 11.500h11" stroke="#222" /></svg>
        <svg viewBox="0 0 46 23"><path d="M18.500 8.500h7v7h-7zM20.500 8.500v-2h7v7h-2" fill="none" stroke="#222" /></svg>
        <svg viewBox="0 0 46 23"><path d="M18 6l11 11M29 6L18 17" stroke="#222" /></svg>
      </div>
    </div>

    <div class="ime">
      <div class="ime-green"></div>
      <div class="ime-bar">
        <svg viewBox="1025 3 182 23">
          <text x="1034" y="21" class="ime-a">A</text>
          <circle cx="1061" cy="11" r="1.800" fill="#1f74c4" /><path d="M1067 13c1 2 0 4-2 5" fill="none" stroke="#1f74c4" stroke-width="2" />
          <circle cx="1086" cy="14.500" r="7.500" fill="none" stroke="#1f74c4" stroke-width="1.600" /><path d="M1082.500 16c2 2.500 5 2.500 7 0" fill="none" stroke="#1f74c4" stroke-width="1.300" /><circle cx="1083.500" cy="12.500" r="1" fill="#1f74c4" /><circle cx="1088.500" cy="12.500" r="1" fill="#1f74c4" />
          <rect x="1105.500" y="6" width="5" height="12" rx="2.500" fill="#1f74c4" /><path d="M1103 14c0 7 10 7 10 0M1108 20v3M1104 23h8" fill="none" stroke="#1f74c4" stroke-width="1.500" />
          <rect x="1122" y="9" width="16" height="11" rx="1.500" fill="#1f74c4" /><path d="M1124 12h12M1124 15h12M1126 18h8" stroke="#fff" stroke-dasharray="1.500 .8" />
          <circle cx="1153" cy="10" r="3.500" fill="#b8c0c8" /><path d="M1147 21c0-5 3-6 6-6s4 .5 5 2v4z" fill="#b8c0c8" /><rect x="1154" y="16" width="8" height="6" fill="#fff" stroke="#b8c0c8" />
          <path d="M1168 11l3-2h2.500c.5 1 2 1 2.500 0h2.500l3 2-1.500 4-2-1v8h-8v-8l-2 1z" fill="#1f74c4" />
          <path d="M1189 21l7-8c-1-3 .5-6 4-6l1 0-2.500 3 2 2 3-2.500c.5 3-1.500 5.500-5 5l-7 8z" fill="#1f74c4" />
        </svg>
      </div>
      <svg class="ime-s" viewBox="0 0 26 26"><rect x="2" y="2" width="22" height="22" rx="3" fill="#ef5a1c" transform="rotate(-10 13 13)" /><path d="M19 8c-3-2-11-2-11 2s11 2 11 6-8 4-11 2" fill="none" stroke="#fff" stroke-width="3" /></svg>
    </div>

    <div class="bar-menu"><ToolRow :chunks="menuRow" :start="0" /></div>
    <div class="bar-top"><ToolRow :chunks="row1" :start="0" /></div>

    <div class="main">
      <aside class="side">
        <div class="side-head">
          <span>模块导航栏</span>
          <svg viewBox="0 0 30 15"><path d="M6 3h5M7 3v6h3V3M5 9h7M8.500 9v4M22 3l8 9M30 3l-8 9" stroke="#fff" fill="none" /></svg>
        </div>
        <div class="side-btn first">工程设置</div>
        <div class="side-btn second">绘图输入</div>
        <div class="side-tools">
          <svg viewBox="0 0 40 20"><path d="M3 2h4v3h3v3H7v3H4V8H1V5h2zM11 9h4v3h3v3h-3v3h-4v-3H8v-3h3z" fill="#3e7a48" stroke="#15331a" stroke-width=".6" /><path d="M22 3h7v3h-7zM28 11h9v3h-9z" fill="#3e7a48" stroke="#15331a" stroke-width=".6" /></svg>
        </div>
        <div class="tree-box">
          <div class="tree">
            <div v-for="(r, i) in tree" :key="i" class="row" :class="{ leaf: !r.f, last: r.last, sel: r.sel }">
              <template v-if="r.f">
                <svg class="chev" viewBox="0 0 10 10"><path v-if="r.open" d="M1 3l4 4 4-4" fill="none" stroke="#555" stroke-width="1.500" /><path v-else d="M3 1l4 4-4 4" fill="none" stroke="#aaa" stroke-width="1.500" /></svg>
                <i class="dots-h"></i>
                <svg class="folder" viewBox="0 0 16 14">
                  <path d="M.5 2.500h5l1 1.500h8.500v9.500H.5z" fill="#e9c265" stroke="#a3863b" />
                  <path v-if="r.open" d="M3 6.500h12.500l-3 7H.5z" fill="#fbeab8" stroke="#a3863b" />
                  <path v-else d="M1 5.500h14v7.500H1z" fill="#fadf8d" />
                </svg>
                <span class="zh">{{ r.zh }}</span>
              </template>
              <template v-else>
                <i class="guide"></i>
                <i class="dots-v"></i>
                <i class="dots-h2"></i>
                <svg class="leaf-ic"><use :href="'#' + r.ic" /></svg>
                <span class="lab"><span class="zh">{{ r.zh }}</span><span class="key">{{ r.k }}</span></span>
              </template>
            </div>
          </div>
          <div class="scroll">
            <svg class="sb-btn" viewBox="0 0 16 12"><path d="M4 8l4-4 4 4" fill="none" stroke="#666" stroke-width="1.600" /></svg>
            <div class="sb-thumb"></div>
            <div class="sb-track"></div>
            <svg class="sb-btn" viewBox="0 0 16 12"><path d="M4 4l4 4 4-4" fill="none" stroke="#666" stroke-width="1.600" /></svg>
          </div>
        </div>
        <div class="side-btn low">单构件输入</div>
        <div class="side-btn final">报表预览</div>
      </aside>

      <section class="work">
        <ToolRow :chunks="row2" :start="205" />
        <ToolRow :chunks="row3" :start="205" />
        <div class="bar-select"><ToolRow :chunks="row4" :start="205" /></div>
        <svg class="canvas" viewBox="205 168 1161 480">
          <g shape-rendering="crispEdges">
            <path d="M205 461L1366 540" stroke="#0a7d0a" fill="none" />
            <path v-for="(ln, i) in hLines" :key="i" :d="`M205 ${ln[0]}L1366 ${ln[1]}`" stroke="#f00" fill="none" />
            <path d="M649 509L588 558M679 511L618 560M724 552L706 566" stroke="#a00000" fill="none" />
            <path d="M1366 597L1352 612" stroke="#f00" fill="none" />
            <circle v-for="ci in circles" :key="ci.t" :cx="ci.x" :cy="ci.y" r="12.500" fill="none" stroke="#0a7d0a" />
          </g>
          <text x="452" y="483" class="cv-txt">6800</text>
          <text x="1256" y="538" class="cv-txt">3300</text>
          <text v-for="ci in circles" :key="'t' + ci.t" :x="ci.x" :y="ci.y + 5" class="cv-txt mid">{{ ci.t }}</text>

          <g shape-rendering="crispEdges">
            <path d="M205 393L654 422L682 444L712 447L708 482L641 478L613 456L205 428z" fill="#ababab" />
            <path d="M654 422L682 444L641 478L613 456z" fill="#a2a2a2" />
            <path d="M682 444L712 447L708 482L641 478z" fill="#b0b0b0" />
            <path d="M205 428L613 456L641 478L709 482L697 511L632 506L603 487L205 458z" fill="#868686" />
            <path d="M767 204L808 171L787 491L746 523z" fill="#737373" />
            <path d="M728 201L767 204L746 523L1024 543L1027 485L1365 508L1366 537L1113 520L1074 517L1071 575L1043 574L695 549L697 511L709 482z" fill="#868686" />
            <path d="M728 201L772 168L808 171L767 204z" fill="#ababab" />
            <path d="M787 491L1026 507L1024 543L746 523z" fill="#ababab" />
            <path d="M1070 451L1366 471L1366 508L1027 485z" fill="#ababab" />
            <path d="M1074 517L1113 520L1113 542L1071 575z" fill="#727272" />
            <path d="M695 550L1071 575" stroke="#f00" fill="none" />
          </g>
          <path d="M637 437L658 453" stroke="#666" fill="none" />

          <path d="M260 598L262 558" stroke="#0a7ff0" stroke-width="4" />
          <path d="M262 549L267 561H257z" fill="#0a7ff0" />
          <path d="M259 597L298 600" stroke="#f00" stroke-width="4" />
          <path d="M297 594L310 601L297 605z" fill="#f00" />
          <text x="249" y="553" class="cv-axis">Z</text>
          <path d="M272 592L276 597L280 592M276 597V602" stroke="#2fd02f" fill="none" />
          <path d="M303 596L308 600M308 596L303 601" stroke="#c00" fill="none" />
          <rect x="258" y="597" width="4" height="2" fill="#2fd02f" />
        </svg>
        <div class="work-foot">
          <ToolRow :chunks="row5" :start="205" />
          <ToolRow :chunks="row6" :start="205" />
        </div>
      </section>
    </div>

    <div class="status">
      <div v-for="(ce, i) in cells" :key="i" class="cell" :style="{ width: ce.w + 'px' }">
        <span v-if="ce.zh" class="zh">{{ ce.zh }}</span><span :class="ce.cls">{{ ce.t }}</span>
      </div>
    </div>

    <div class="taskbar">
      <div class="start"><svg viewBox="0 0 16 16"><path d="M0 2.300L6.500 1.400v6.200H0zM7.300 1.300L16 0v7.600H7.300zM0 8.400h6.500v6.200L0 13.700zM7.300 8.400H16V16l-8.700-1.300z" fill="#fff" /></svg></div>
      <div class="search">
        <i class="ring"></i>
        <span class="search-txt">在这里输入你要搜索的内容</span>
        <svg class="mic" viewBox="0 0 16 20"><rect x="5" y="1" width="6" height="11" rx="3" fill="none" stroke="#aaa" /><path d="M3 9c0 6 10 6 10 0M8 14v4M5 18h6" fill="none" stroke="#aaa" /></svg>
      </div>
      <div class="apps">
        <div v-for="ti in taskIcons" :key="ti.ic" class="app" :class="{ run: ti.run }" :style="ti.style">
          <svg viewBox="0 0 24 24"><use :href="'#' + ti.ic" /></svg>
        </div>
      </div>
      <div class="app-active"><svg viewBox="0 0 24 24"><use href="#k-app" /></svg></div>
      <div class="cpu"><span>52%</span><span>CPU使用</span></div>
      <div class="tray">
        <svg v-for="tr in trayIcons" :key="tr.ic" :style="tr.style" class="tray-ic"><use :href="'#' + tr.ic" /></svg>
      </div>
      <div class="clock"><span>15:20</span><span>2017/12/2</span></div>
      <div class="notify">
        <svg viewBox="0 0 18 18"><path d="M1 1h16v12H6l-3 3v-3H1z" fill="#fff" /><path d="M4 4.500h10M4 7.500h10M4 10.500h7" stroke="#222" /></svg>
        <b class="badge">20</b>
      </div>
    </div>
  </div>
</template>

<style scoped>
.screen { position: relative; width: 1366px; height: 768px; overflow: hidden; background: #f0f0f0; display: flex; flex-direction: column; font-family: "Noto Sans", "Noto Sans CJK SC", sans-serif; font-size: 12px; color: #222; }
.defs { position: absolute; width: 0; height: 0; }
.title { height: 23px; flex: none; background: #fff; display: flex; align-items: center; position: relative; }
.title-ic { width: 14px; height: 14px; margin-left: 4px; }
.title-txt { margin-left: 5px; white-space: nowrap; font-family: "Open Sans", "Noto Sans CJK SC", sans-serif; font-size: 12.500px; }
.win { position: absolute; right: 2px; top: 0; display: flex; gap: 0; }
.win svg { width: 46px; height: 23px; }
.ime { position: absolute; left: 1003px; top: 0; width: 205px; height: 30px; z-index: 3; }
.ime-green { position: absolute; left: 44px; top: 0; width: 48px; height: 3px; background: #56c060; }
.ime-bar { position: absolute; left: 22px; top: 3px; right: 0; height: 23px; background: #f7f9fc; border: 1px solid #c5d3e2; box-sizing: border-box; }
.ime-bar svg { display: block; width: 100%; height: 100%; }
.ime-a { font: 20px "Liberation Sans", sans-serif; fill: #1f74c4; }
.ime-s { position: absolute; left: -1px; top: 3px; width: 26px; height: 26px; }

.bar-menu { height: 31px; flex: none; display: flex; align-items: center; background: linear-gradient(#fff, #f4f4f4); }
.bar-top { height: 30px; flex: none; padding-top: 0; }

.main { flex: none; height: 624px; display: flex; }
.side { width: 200px; flex: none; display: flex; flex-direction: column; }
.side-head { height: 15px; background: #0a50e4; color: #fff; display: flex; justify-content: space-between; align-items: center; font-size: 12.600px; line-height: 15px; flex: none; }
.side-head svg { width: 30px; height: 15px; margin-right: 3px; }
.side-btn { height: 21px; margin-top: 1px; flex: none; text-align: center; line-height: 21px; background: linear-gradient(#fafafa, #ededed); border-bottom: 1px solid #a4a4a4; border-right: 1px solid #c4c4c4; }
.side-btn.first { height: 22px; line-height: 24px; }
.side-btn.second { height: 20px; line-height: 22px; }
.side-btn.final { line-height: 20px; }
.side-btn.low { margin-top: 2px; border-top: 1px solid #d0d0d0; }
.side-tools { height: 26px; flex: none; }
.side-tools svg { display: block; width: 40px; height: 20px; margin: 4px 0 0 6px; }
.tree-box { height: 488px; flex: none; margin: 0 1px 0 2px; border: 1px solid #a0a0a0; background: #fff; display: flex; box-sizing: border-box; }
.tree { flex: 1; overflow: hidden; padding-top: 2px; }
.row { position: relative; height: 16px; display: flex; align-items: center; white-space: nowrap; }
.chev { width: 10px; height: 10px; margin-left: 7px; flex: none; }
.dots-h { width: 4px; border-top: 1px dotted #666; margin-left: 2px; flex: none; }
.folder { width: 16px; height: 14px; flex: none; }
.row > .zh { margin-left: 5px; line-height: 16px; }
.guide { position: absolute; left: 12px; top: 0; bottom: 0; border-left: 1px dotted #666; }
.dots-v { position: absolute; left: 32px; top: 0; height: 16px; border-left: 1px dotted #666; }
.last .dots-v { height: 8px; }
.dots-h2 { position: absolute; left: 33px; top: 8px; width: 10px; border-top: 1px dotted #666; }
.leaf-ic { width: 16px; height: 16px; margin-left: 43px; flex: none; }
.lab { height: 16px; line-height: 16px; padding: 0 3px 0 4px; }
.sel .lab { background: #d9d9d9; }
.key { font-family: "Liberation Mono", monospace; font-size: 10px; letter-spacing: -.5px; }
.scroll { width: 16px; flex: none; display: flex; flex-direction: column; background: #f0f0f0; }
.sb-btn { width: 16px; height: 17px; flex: none; }
.sb-thumb { height: 366px; flex: none; background: #cdcdcd; }
.sb-track { flex: 1; }

.work { width: 1161px; margin-left: 5px; flex: none; display: flex; flex-direction: column; }
.bar-select { padding-top: 2px; flex: none; }
.canvas { display: block; width: 1161px; height: 480px; margin-top: 1px; background: #000; flex: none; }
.cv-txt { font: 13px "Liberation Sans", sans-serif; fill: #ddd; }
.cv-txt.mid { text-anchor: middle; font-size: 14px; }
.cv-axis { font: 15px "Liberation Sans", sans-serif; fill: #0a7ff0; }
.work-foot { flex: none; padding-top: 2px; }

.status { height: 20px; flex: none; display: flex; gap: 2px; }
.cell { flex: none; box-sizing: border-box; border: 1px solid #dcdcdc; background: linear-gradient(#fff, #f4f4f4); line-height: 18px; padding-left: 2px; white-space: nowrap; overflow: hidden; }
.mono { font-family: "Liberation Mono", monospace; font-size: 10px; }

.taskbar { height: 40px; flex: none; background: #05090c; display: flex; align-items: stretch; color: #fff; }
.start { width: 48px; flex: none; background: #000; display: flex; align-items: center; justify-content: center; }
.start svg { width: 16px; height: 16px; }
.search { width: 344px; flex: none; background: #333; display: flex; align-items: center; position: relative; }
.ring { width: 14px; height: 14px; border: 3px solid #ddd; border-radius: 50%; margin-left: 9px; box-shadow: 0 0 1px #999; }
.search-txt { margin-left: 7px; font-size: 14px; color: #858a8f; }
.mic { position: absolute; left: 315px; top: 10px; width: 16px; height: 20px; }
.apps { display: flex; flex: none; width: 533px; }
.app { flex: none; height: 40px; display: flex; align-items: center; position: relative; }
.app svg { width: 24px; height: 24px; }
.app.run::after { content: ""; position: absolute; left: -8px; right: -8px; bottom: 0; height: 2px; background: #76b9ed; }
.app-active { width: 45px; flex: none; background: #333e42; display: flex; align-items: center; justify-content: center; border-bottom: 2px solid #76b9ed; box-sizing: border-box; }
.app-active svg { width: 24px; height: 24px; }
.cpu { width: 88px; flex: none; display: flex; flex-direction: column; align-items: center; justify-content: center; font-size: 13px; line-height: 18px; color: #ddd; }
.tray { display: flex; align-items: center; flex: none; width: 180px; margin-left: -8px; }
.tray-ic { flex: none; height: 16px; }
.clock { width: 96px; flex: none; margin-left: -2px; display: flex; flex-direction: column; align-items: center; justify-content: center; font-size: 13px; line-height: 18px; color: #ddd; }
.notify { position: relative; flex: 1; }
.notify svg { position: absolute; left: 11px; top: 11px; width: 18px; height: 18px; }
.badge { position: absolute; left: 19px; top: 18px; width: 21px; height: 17px; border-radius: 9px; background: #444; border: 1px solid #999; font: bold 12px/16px "Liberation Sans", sans-serif; text-align: center; box-sizing: border-box; color: #fff; }
</style>

<style>
.tb-row { display: flex; height: 26px; flex: none; align-items: center; margin-bottom: 1px; }
.tb-chunk { flex: none; height: 26px; display: flex; align-items: center; background: linear-gradient(#fbfbfb, #f3f3f3); border-radius: 3px; box-sizing: border-box; }
.tb-flat { background: none; }
.tb-tip { height: 30px; background: linear-gradient(#fcfcfc, #f4f4f4); }
.tb-stub { background: linear-gradient(90deg, #f4f4f4, #fbfbfb); }
.tb-tool { flex: none; height: 23px; display: flex; align-items: center; justify-content: space-between; box-sizing: border-box; white-space: nowrap; }
.tb-ic { width: 16px; height: 16px; flex: none; }
.tb-txt { flex: none; line-height: 16px; margin-left: auto; }
.tb-dis { color: #a8a8a8; }
.tb-on { background: #dceaf7; border: 2px solid #1f87d8; padding: 0 2px 0 1px; height: 23px; }
.tb-wide { border-width: 1px; padding: 0 4px 0 3px; }
.tb-arrow { flex: none; height: 5px; position: relative; }
.tb-arrow::after { content: ""; position: absolute; left: 0; top: 1px; border: 3px solid transparent; border-top: 3px solid #222; border-bottom: 0; }
.tb-sep { flex: none; height: 20px; background: #c4c4c4; }
.tb-grip { flex: none; height: 18px; background: repeating-linear-gradient(#b0b0b0 0 2px, transparent 2px 4px); }
.tb-combo { flex: none; height: 23px; line-height: 23px; background: #fff; padding-left: 2px; box-sizing: border-box; white-space: nowrap; }
.tb-label { flex: none; white-space: nowrap; line-height: 16px; }
.tb-green { color: #2f7a10; }
.tb-muted { color: #808080; }
.tb-more { font: bold 14px/14px "Liberation Sans", sans-serif; margin-top: -10px; }
.tb-num { flex: none; height: 23px; box-sizing: border-box; border: 1px solid #707070; display: flex; align-items: center; justify-content: flex-end; }
.tb-val { color: #7f8fa6; font-size: 12px; margin-right: 6px; }
.tb-spin { width: 12px; display: flex; flex-direction: column; gap: 9px; align-items: center; flex: none; margin-right: 1px; }
.tb-up, .tb-down { display: block; width: 0; height: 0; border: 3px solid transparent; }
.tb-up { border-bottom: 3px solid #555; border-top: 0; }
.tb-down { border-top: 3px solid #555; border-bottom: 0; }
.tb-check { flex: none; height: 11px; border: 1px solid #888; box-sizing: border-box; background: #fbfbfb; }
</style>
